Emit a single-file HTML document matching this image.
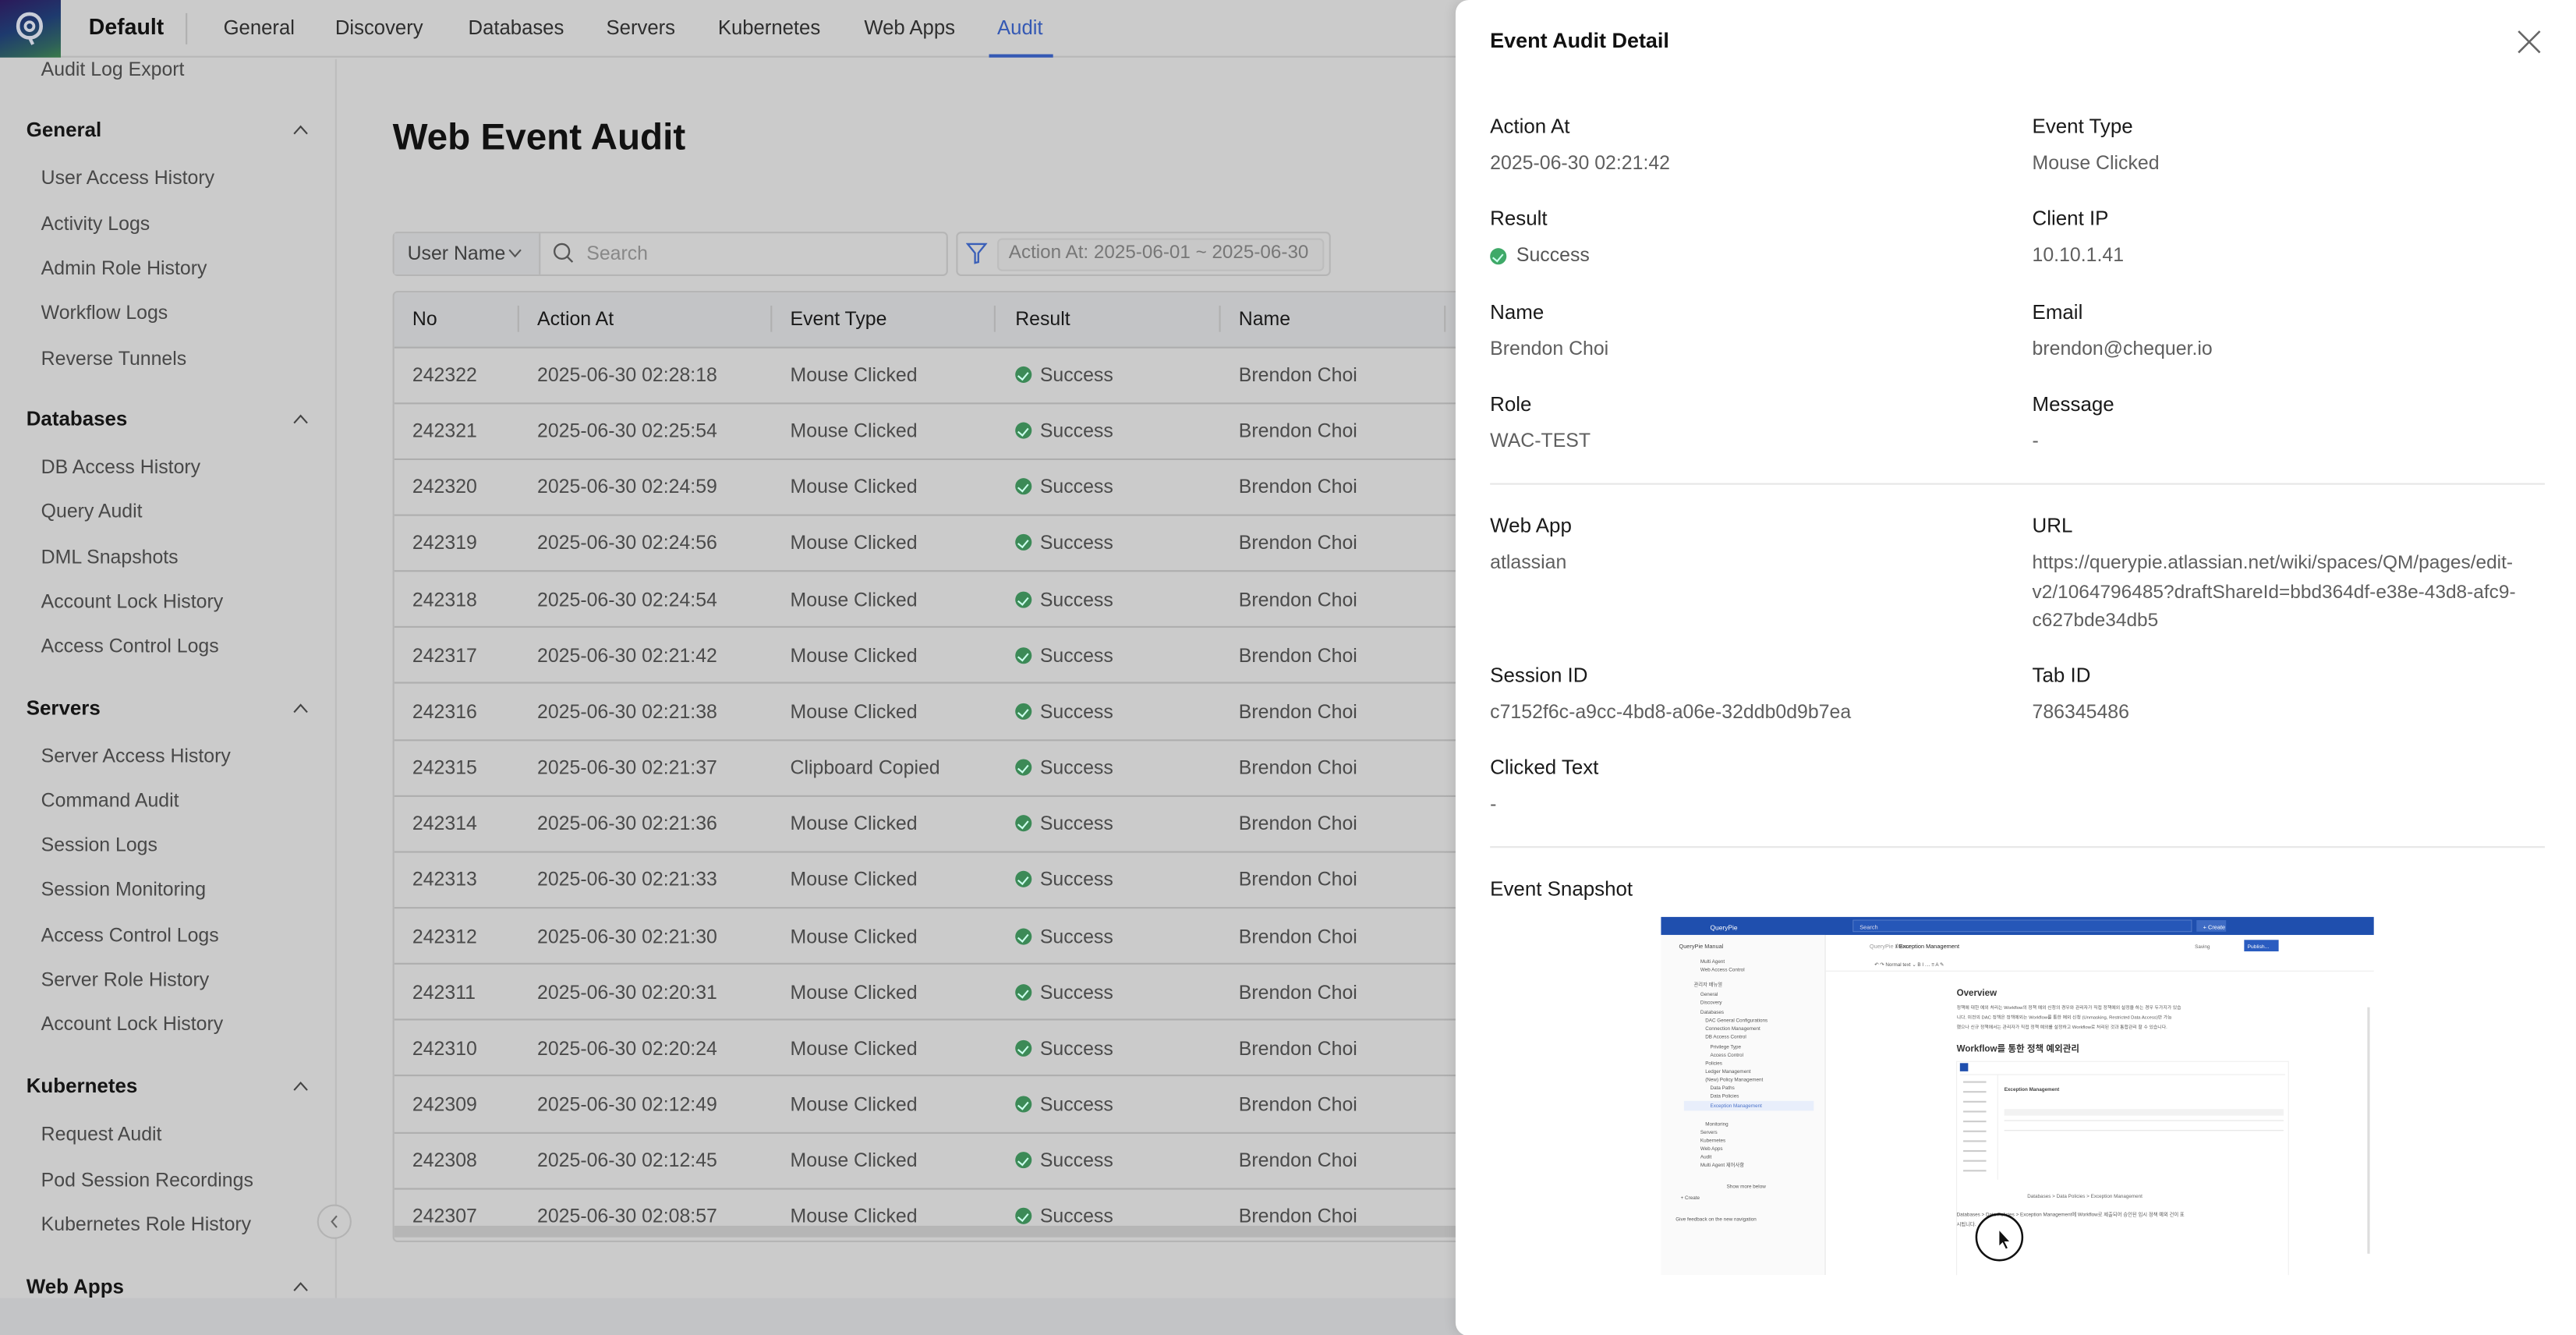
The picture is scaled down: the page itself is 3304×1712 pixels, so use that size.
<!DOCTYPE html>
<html><head><meta charset="utf-8"><style>
*{margin:0;padding:0;box-sizing:border-box}
html,body{width:3304px;height:1712px;overflow:hidden;background:#cbcbcb}
#w{position:absolute;left:0;top:0;width:1568px;height:812.5px;transform:scale(2.10714);transform-origin:0 0;font-family:"Liberation Sans","Noto Sans CJK KR",sans-serif;background:#cbcbcb;overflow:hidden}
.a{position:absolute;white-space:nowrap;line-height:16px}
.nav{font-size:12.2px;color:#2e2e2e}
.si{font-size:11.8px;color:#484848;left:25px}
.sh{font-size:12.3px;color:#151515;font-weight:bold;left:16px}
.chev{position:absolute;left:178px;width:10px;height:6px}
.td{font-size:11.8px;color:#4a4a4a}
.th{font-size:11.8px;color:#1a1a1a}
.lb{font-size:12.3px;color:#1a1a1a}
.vl{font-size:11.8px;color:#5f5f5f}
.ck{position:absolute;width:10px;height:10px;border-radius:50%;background:#3c8a57}
.ck:after{content:"";position:absolute;left:3.3px;top:2px;width:2.5px;height:4.5px;border:solid #cfe;border-width:0 1px 1px 0;transform:rotate(40deg)}
</style></head><body><div id="w">
<div style="position:absolute;left:0;top:0;width:1568px;height:35px;background:#cbcbcb;border-bottom:1px solid #b8b8b8"></div>
<div style="position:absolute;left:0;top:0;width:37px;height:35px;background:linear-gradient(160deg,#2b1a5a 0%,#1e3a6e 45%,#2d5e5a 80%,#3a7a4a 100%)"></div>
<svg style="position:absolute;left:8px;top:6px" width="20" height="23" viewBox="0 0 20 23"><path d="M10 2.5 C14.5 2.5 17 6 17 10 C17 14 14 17 10 17 C6 17 3 14 3 10 C3 6 5.5 2.5 10 2.5 Z" fill="none" stroke="#c9cdd8" stroke-width="2.2"/><circle cx="10" cy="10" r="2.6" fill="none" stroke="#c9cdd8" stroke-width="1.8"/><path d="M10 17 L12 21" stroke="#c9cdd8" stroke-width="2"/></svg>
<div class="a" style="left:54px;top:9px;font-size:13.5px;font-weight:bold;color:#111">Default</div>
<div style="position:absolute;left:113px;top:8px;width:1px;height:19px;background:#b0b0b0"></div>
<div class="a nav" style="left:136px;top:9px">General</div>
<div class="a nav" style="left:204px;top:9px">Discovery</div>
<div class="a nav" style="left:285px;top:9px">Databases</div>
<div class="a nav" style="left:369px;top:9px">Servers</div>
<div class="a nav" style="left:437px;top:9px">Kubernetes</div>
<div class="a nav" style="left:526px;top:9px">Web Apps</div>
<div class="a nav" style="left:607px;top:9px;color:#3559b4">Audit</div>
<div style="position:absolute;left:602px;top:33px;width:39px;height:2px;background:#3559b4"></div>
<div style="position:absolute;left:204px;top:36px;width:1px;height:754px;background:#bdbdbd"></div>
<div class="a si" style="top:34px">Audit Log Export</div>
<div class="a sh" style="top:71px">General</div>
<div class="a si" style="top:100px">User Access History</div>
<div class="a si" style="top:128px">Activity Logs</div>
<div class="a si" style="top:155px">Admin Role History</div>
<div class="a si" style="top:182px">Workflow Logs</div>
<div class="a si" style="top:210px">Reverse Tunnels</div>
<div class="a sh" style="top:247px">Databases</div>
<div class="a si" style="top:276px">DB Access History</div>
<div class="a si" style="top:303px">Query Audit</div>
<div class="a si" style="top:331px">DML Snapshots</div>
<div class="a si" style="top:358px">Account Lock History</div>
<div class="a si" style="top:385px">Access Control Logs</div>
<div class="a sh" style="top:423px">Servers</div>
<div class="a si" style="top:452px">Server Access History</div>
<div class="a si" style="top:479px">Command Audit</div>
<div class="a si" style="top:506px">Session Logs</div>
<div class="a si" style="top:533px">Session Monitoring</div>
<div class="a si" style="top:561px">Access Control Logs</div>
<div class="a si" style="top:588px">Server Role History</div>
<div class="a si" style="top:615px">Account Lock History</div>
<div class="a sh" style="top:653px">Kubernetes</div>
<div class="a si" style="top:682px">Request Audit</div>
<div class="a si" style="top:710px">Pod Session Recordings</div>
<div class="a si" style="top:737px">Kubernetes Role History</div>
<div class="a sh" style="top:775px">Web Apps</div>
<svg class="chev" style="top:76px" viewBox="0 0 10 6"><path d="M1 5.5 L5 1 L9 5.5" fill="none" stroke="#444" stroke-width="1"/></svg>
<svg class="chev" style="top:252px" viewBox="0 0 10 6"><path d="M1 5.5 L5 1 L9 5.5" fill="none" stroke="#444" stroke-width="1"/></svg>
<svg class="chev" style="top:428px" viewBox="0 0 10 6"><path d="M1 5.5 L5 1 L9 5.5" fill="none" stroke="#444" stroke-width="1"/></svg>
<svg class="chev" style="top:658px" viewBox="0 0 10 6"><path d="M1 5.5 L5 1 L9 5.5" fill="none" stroke="#444" stroke-width="1"/></svg>
<svg class="chev" style="top:780px" viewBox="0 0 10 6"><path d="M1 5.5 L5 1 L9 5.5" fill="none" stroke="#444" stroke-width="1"/></svg>
<div style="position:absolute;left:193px;top:733px;width:21px;height:21px;border-radius:50%;border:1px solid #b3b3b3;background:#cbcbcb"></div>
<svg style="position:absolute;left:199px;top:739px" width="9" height="9" viewBox="0 0 9 9"><path d="M6 1 L3 4.5 L6 8" fill="none" stroke="#666" stroke-width="1"/></svg>
<div class="a" style="left:239px;top:70px;font-size:22.6px;line-height:28px;font-weight:bold;color:#111">Web Event Audit</div>
<div style="position:absolute;left:239px;top:141px;width:338px;height:27px;border:1px solid #b5b5b5;border-radius:3px;background:#cbcbcb"></div>
<div style="position:absolute;left:240px;top:142px;width:89px;height:25px;background:#c3c4c6;border-right:1px solid #b5b5b5"></div>
<div class="a" style="left:248px;top:146px;font-size:11.8px;color:#3e3e3e">User Name</div>
<svg style="position:absolute;left:309px;top:151px" width="9" height="6" viewBox="0 0 9 6"><path d="M1 1 L4.5 5 L8 1" fill="none" stroke="#555" stroke-width="1"/></svg>
<svg style="position:absolute;left:336px;top:147px" width="14" height="14" viewBox="0 0 14 14"><circle cx="6" cy="6" r="4.5" fill="none" stroke="#555" stroke-width="1.1"/><path d="M9.3 9.3 L12.5 12.5" stroke="#555" stroke-width="1.1"/></svg>
<div class="a" style="left:357px;top:146px;font-size:11.8px;color:#888">Search</div>
<div style="position:absolute;left:582px;top:141px;width:228px;height:27px;border:1px solid #b5b5b5;border-radius:3px"></div>
<svg style="position:absolute;left:588px;top:147px" width="13" height="14" viewBox="0 0 13 14"><path d="M1 1.5 H12 L7.5 7 V12.5 L5.5 13 V7 Z" fill="none" stroke="#3a5fb8" stroke-width="1.1"/></svg>
<div style="position:absolute;left:607px;top:145px;width:199px;height:20px;border:1px solid #bdbdbd;border-radius:3px;background:#c8c8c8"></div>
<div class="a" style="left:614px;top:146px;font-size:11.5px;color:#777">Action At: 2025-06-01 ~ 2025-06-30</div>
<div style="position:absolute;left:239px;top:177px;width:660px;height:579px;border:1px solid #b5b5b5;border-radius:3px;overflow:hidden">
<div style="position:absolute;left:0;top:0;width:660px;height:34px;background:#c3c4c6;border-bottom:1px solid #aeaeae"></div>
<div style="position:absolute;left:0;top:568px;width:660px;height:7px;background:#b6b6b6"></div>
</div>
<div style="position:absolute;left:315px;top:186px;width:1px;height:16px;background:#b0b0b0"></div>
<div style="position:absolute;left:469px;top:186px;width:1px;height:16px;background:#b0b0b0"></div>
<div style="position:absolute;left:605px;top:186px;width:1px;height:16px;background:#b0b0b0"></div>
<div style="position:absolute;left:742px;top:186px;width:1px;height:16px;background:#b0b0b0"></div>
<div style="position:absolute;left:879px;top:186px;width:1px;height:16px;background:#b0b0b0"></div>
<div class="a th" style="left:251px;top:186px">No</div>
<div class="a th" style="left:327px;top:186px">Action At</div>
<div class="a th" style="left:481px;top:186px">Event Type</div>
<div class="a th" style="left:618px;top:186px">Result</div>
<div class="a th" style="left:754px;top:186px">Name</div>
<div id="tb"></div>
<div style="position:absolute;left:0;top:790px;width:1568px;height:23px;background:#c3c4c6"></div>
<div style="position:absolute;left:886px;top:0;width:682px;height:813px;background:#fff;border-radius:8px 0 0 8px;box-shadow:-2px 0 6px rgba(0,0,0,.08)"></div>
<div class="a" style="left:907px;top:17px;font-size:12.8px;font-weight:bold;color:#111">Event Audit Detail</div>
<svg style="position:absolute;left:1532px;top:18px" width="15" height="15" viewBox="0 0 15 15"><path d="M1 1 L14 14 M14 1 L1 14" stroke="#666" stroke-width="1.2"/></svg>
<div class="a lb" style="left:907px;top:69px">Action At</div><div class="a vl" style="left:907px;top:91px">2025-06-30 02:21:42</div>
<div class="a lb" style="left:1237px;top:69px">Event Type</div><div class="a vl" style="left:1237px;top:91px">Mouse Clicked</div>
<div class="a lb" style="left:907px;top:125px">Result</div><div class="ck" style="left:907px;top:151px;background:#3fa968"></div><div class="a vl" style="left:923px;top:147px;color:#555">Success</div>
<div class="a lb" style="left:1237px;top:125px">Client IP</div><div class="a vl" style="left:1237px;top:147px">10.10.1.41</div>
<div class="a lb" style="left:907px;top:182px">Name</div><div class="a vl" style="left:907px;top:204px">Brendon Choi</div>
<div class="a lb" style="left:1237px;top:182px">Email</div><div class="a vl" style="left:1237px;top:204px">brendon@chequer.io</div>
<div class="a lb" style="left:907px;top:238px">Role</div><div class="a vl" style="left:907px;top:260px">WAC-TEST</div>
<div class="a lb" style="left:1237px;top:238px">Message</div><div class="a vl" style="left:1237px;top:260px">-</div>
<div style="position:absolute;left:907px;top:294px;width:642px;height:1px;background:#e6e6e6"></div>
<div class="a lb" style="left:907px;top:312px">Web App</div><div class="a vl" style="left:907px;top:334px">atlassian</div>
<div class="a lb" style="left:1237px;top:312px">URL</div>
<div class="a vl" style="left:1237px;top:334px;line-height:17.5px;font-size:11.6px">https://querypie.atlassian.net/wiki/spaces/QM/pages/edit-<br>v2/1064796485?draftShareId=bbd364df-e38e-43d8-afc9-<br>c627bde34db5</div>
<div class="a lb" style="left:907px;top:403px">Session ID</div><div class="a vl" style="left:907px;top:425px">c7152f6c-a9cc-4bd8-a06e-32ddb0d9b7ea</div>
<div class="a lb" style="left:1237px;top:403px">Tab ID</div><div class="a vl" style="left:1237px;top:425px">786345486</div>
<div class="a lb" style="left:907px;top:459px">Clicked Text</div><div class="a vl" style="left:907px;top:481px">-</div>
<div style="position:absolute;left:907px;top:515px;width:642px;height:1px;background:#e6e6e6"></div>
<div class="a lb" style="left:907px;top:533px">Event Snapshot</div>
<svg style="position:absolute;left:1011px;top:558px" width="434" height="218" viewBox="0 0 434 218" font-family="Liberation Sans,Noto Sans CJK KR,sans-serif">
<rect width="434" height="218" fill="#fff"/>
<rect width="434" height="11" fill="#1f4fae"/>
<rect x="117" y="2" width="206" height="7" fill="#2657b8" stroke="#5d82cc" stroke-width=".4"/>
<rect x="326" y="2" width="18" height="7" fill="#3e6bc4"/>
<text x="30" y="8" font-size="4" fill="#fff">QueryPie</text><text x="121" y="7.5" font-size="3.5" fill="#dde">Search</text><text x="330" y="7.5" font-size="3.5" fill="#fff">+ Create</text>
<rect x="0" y="11" width="100" height="207" fill="#fafafa"/>
<line x1="100" y1="11" x2="100" y2="218" stroke="#e5e5e5" stroke-width=".5"/>
<line x1="100" y1="33" x2="434" y2="33" stroke="#eee" stroke-width=".5"/>
<text x="11" y="19" font-size="3.5" fill="#444">QueryPie Manual</text>
<g font-size="3" fill="#555">
<text x="24" y="28">Multi Agent</text><text x="24" y="33">Web Access Control</text><text x="20" y="42">관리자 매뉴얼</text>
<text x="24" y="48">General</text><text x="24" y="53">Discovery</text><text x="24" y="59">Databases</text><text x="27" y="64">DAC General Configurations</text><text x="27" y="69">Connection Management</text><text x="27" y="74">DB Access Control</text><text x="30" y="80">Privilege Type</text><text x="30" y="85">Access Control</text><text x="27" y="90">Policies</text><text x="27" y="95">Ledger Management</text><text x="27" y="100">(New) Policy Management</text><text x="30" y="105">Data Paths</text><text x="30" y="110">Data Policies</text><text x="27" y="127">Monitoring</text><text x="24" y="132">Servers</text><text x="24" y="137">Kubernetes</text><text x="24" y="142">Web Apps</text><text x="24" y="147">Audit</text><text x="24" y="152">Multi Agent 제어사항</text><text x="40" y="165">Show more below</text><text x="12" y="172">+ Create</text><text x="9" y="185">Give feedback on the new navigation</text>
</g>
<rect x="14" y="112" width="79" height="6" fill="#e8eefb"/><text x="30" y="116" font-size="3" fill="#4a72c8">Exception Management</text>
<text x="127" y="19" font-size="3.5" fill="#999">QueryPie Manu</text><text x="143" y="19" font-size="3.5" fill="#222">/ Exception Management</text>
<rect x="355" y="14" width="21" height="7" fill="#2a5cc0"/><text x="357" y="19" font-size="3.2" fill="#fff">Publish...</text>
<text x="325" y="19" font-size="3" fill="#666">Saving</text>
<text x="130" y="30" font-size="3" fill="#555">↶ ↷   Normal text ⌄   B  I  ⋯  ≡  A  ✎</text>
<text x="180" y="48" font-size="5.5" font-weight="bold" fill="#333">Overview</text>
<g fill="#555" font-size="2.8"><text x="180" y="56">정책에 대한 예외 처리는 Workflow의 정책 예외 신청의 경우와 관리자가 직접 정책예외 설정을 하는 경우 두가지가 있습</text><text x="180" y="62">니다. 이전의 DAC 정책은 정책에외는 Workflow를 통한 예외 신청 (Unmasking, Restricted Data Access)만 가능</text><text x="180" y="68">했으나 신규 정책에서는 관리자가 직접 정책 예외를 설정하고 Workflow로 처리된 것과 통합관리 할 수 있습니다.</text></g>
<text x="180" y="82" font-size="5.5" font-weight="bold" fill="#333">Workflow를 통한 정책 예외관리</text>
<rect x="180" y="88" width="202" height="158" fill="#fff" stroke="#eee" stroke-width=".5"/>
<rect x="182" y="89" width="5" height="5" fill="#1f4fae"/>
<line x1="182" y1="96" x2="380" y2="96" stroke="#eee" stroke-width=".5"/>
<line x1="205" y1="96" x2="205" y2="160" stroke="#eee" stroke-width=".5"/>
<text x="209" y="106" font-size="3" font-weight="bold" fill="#444">Exception Management</text>
<rect x="209" y="117" width="170" height="4" fill="#f2f2f2"/>
<line x1="209" y1="124" x2="379" y2="124" stroke="#e5e5e5" stroke-width=".5"/>
<line x1="209" y1="130" x2="379" y2="130" stroke="#e5e5e5" stroke-width=".5"/>
<g fill="#ccc"><rect x="184" y="100" width="14" height="1"/><rect x="184" y="106" width="14" height="1"/><rect x="184" y="112" width="14" height="1"/><rect x="184" y="118" width="14" height="1"/><rect x="184" y="124" width="14" height="1"/><rect x="184" y="130" width="14" height="1"/><rect x="184" y="136" width="14" height="1"/><rect x="184" y="142" width="14" height="1"/><rect x="184" y="148" width="14" height="1"/><rect x="184" y="154" width="14" height="1"/></g>
<text x="223" y="171" font-size="3" fill="#666">Databases &gt; Data Policies &gt; Exception Management</text>
<text x="180" y="182" font-size="3" fill="#555">Databases &gt; Data Policies &gt; Exception Management에 Workflow로 제출되어 승인된 임시 정책 예외 건이 표</text>
<text x="180" y="188" font-size="3" fill="#555">시됩니다.</text>
<circle cx="206" cy="195" r="14" fill="none" stroke="#111" stroke-width="1.2"/>
<path d="M206 191 L206 200 L208 198 L210 202 L211 201.5 L209 197.5 L212 197.5 Z" fill="#111"/>
<rect x="430" y="55" width="1.5" height="150" fill="#ddd"/>
</svg>
</div>
<script>
var n=[242322,242321,242320,242319,242318,242317,242316,242315,242314,242313,242312,242311,242310,242309,242308,242307];
var t=["02:28:18","02:25:54","02:24:59","02:24:56","02:24:54","02:21:42","02:21:38","02:21:37","02:21:36","02:21:33","02:21:30","02:20:31","02:20:24","02:12:49","02:12:45","02:08:57"];
var h="";
for(var i=0;i<16;i++){var c=228+i*34.15;var tp=c-8;
if(i>0)h+='<div style="position:absolute;left:240px;top:'+(c-17.5)+'px;width:646px;height:1px;background:#aeaeae"></div>';
h+='<div class="a td" style="left:251px;top:'+tp+'px">'+n[i]+'</div><div class="a td" style="left:327px;top:'+tp+'px">2025-06-30 '+t[i]+'</div><div class="a td" style="left:481px;top:'+tp+'px">'+(i==7?'Clipboard Copied':'Mouse Clicked')+'</div><div class="ck" style="left:618px;top:'+(c-5)+'px"></div><div class="a td" style="left:633px;top:'+tp+'px">Success</div><div class="a td" style="left:754px;top:'+tp+'px">Brendon Choi</div>';}
document.getElementById("tb").innerHTML=h;
</script>
</body></html>
